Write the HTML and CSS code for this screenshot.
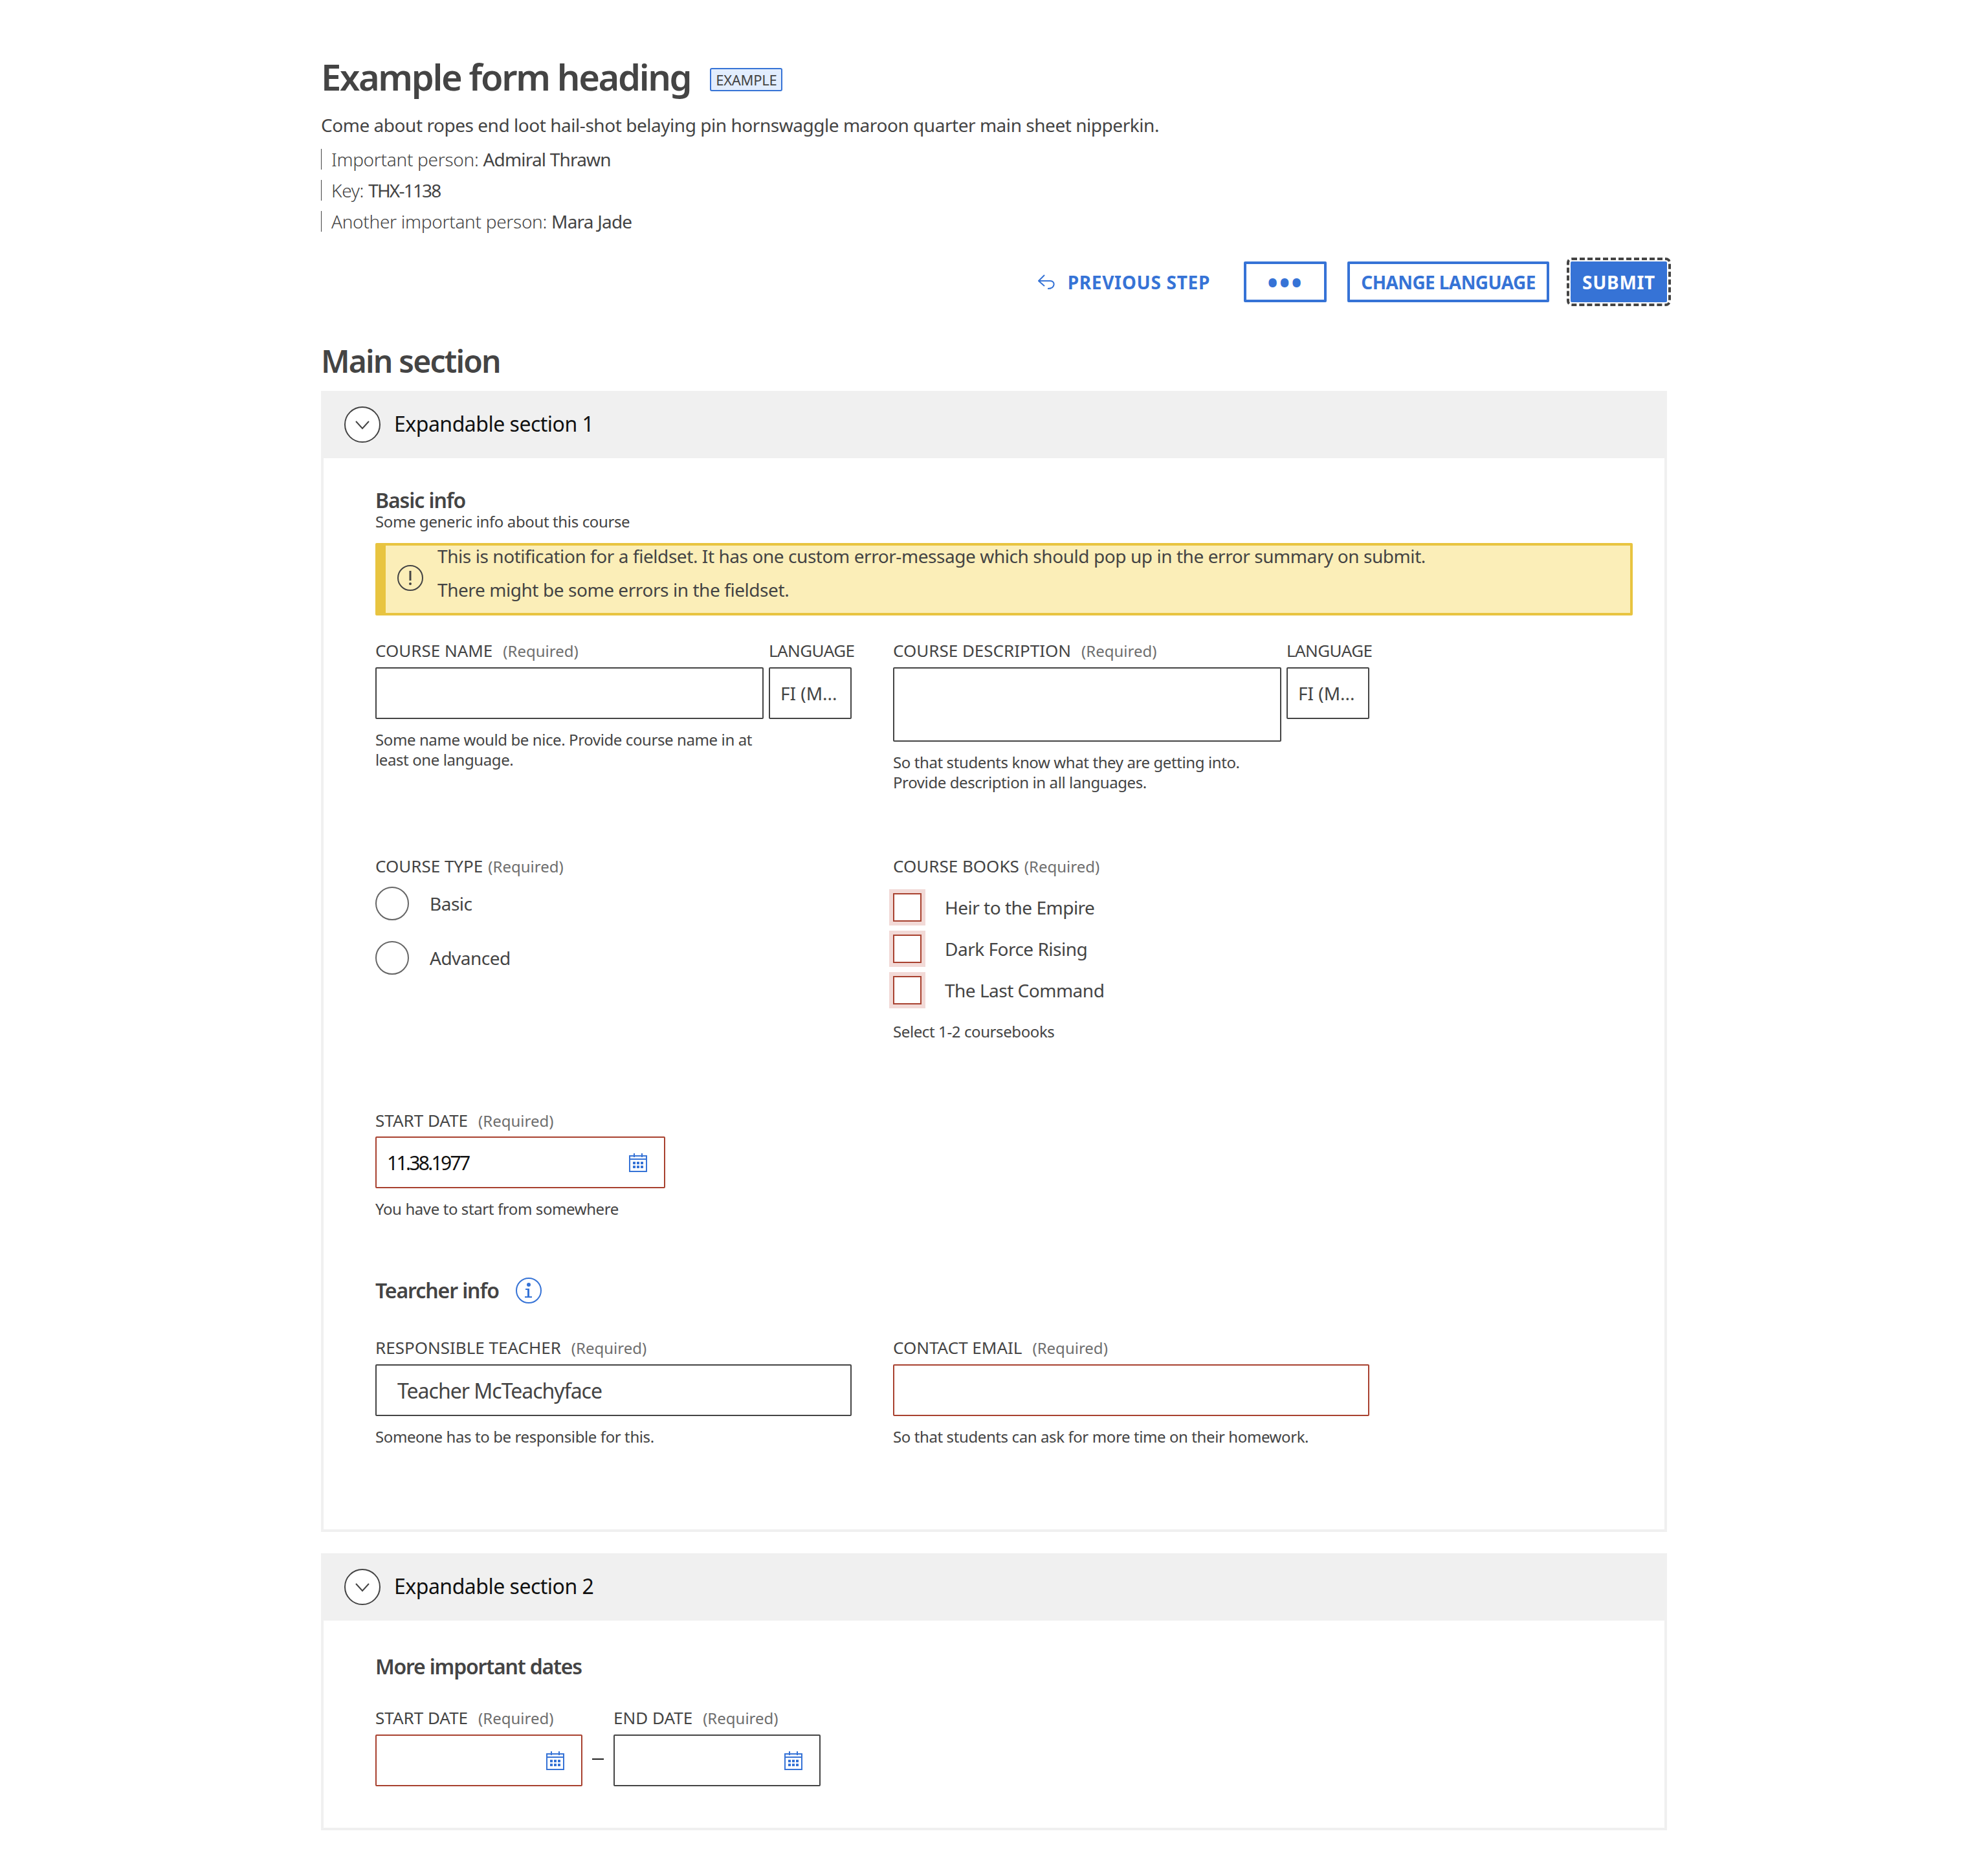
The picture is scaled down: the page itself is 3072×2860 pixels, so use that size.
FILE: index.html
```html
<!DOCTYPE html>
<html>
<head>
    <meta charset="utf-8">
    <title>Example form heading</title>
    <link rel="stylesheet" href="styles.css">
</head>
<body>
    <svg class="defs" width="0" height="0">
        <symbol id="cal" viewBox="0 0 28 30">
            <path d="M1 5h26v24H1zM1 10h26M8 1v6M20 1v6" fill="none" stroke="currentColor" stroke-width="2"/>
            <path d="M6 14h4v4H6zM12 14h4v4h-4zM18 14h4v4h-4zM6 20h4v4H6zM12 20h4v4h-4zM18 20h4v4h-4z" fill="currentColor"/>
        </symbol>
        <symbol id="chevron" viewBox="0 0 56 56">
            <circle cx="28" cy="28" r="27" fill="#fff" stroke="#444" stroke-width="2"/>
            <path d="M18 23l10 11 10-11" fill="none" stroke="#444" stroke-width="2"/>
        </symbol>
    </svg>

    <div class="page">
        <div class="title-row">
            <h1>Example form heading</h1>
            <span class="tag">EXAMPLE</span>
        </div>
        <p class="lead">Come about ropes end loot hail-shot belaying pin hornswaggle maroon quarter main sheet nipperkin.</p>
        <ul class="meta">
            <li>Important person: <b>Admiral Thrawn</b></li>
            <li>Key: <b class="key">THX-1138</b></li>
            <li>Another important person: <b>Mara Jade</b></li>
        </ul>

        <div class="actions">
            <a class="btn-link">
                <svg width="26" height="24" viewBox="0 0 26 24"><path d="M10 1L1 10l9 8M1 10h18c8 0 8 12-4 12" fill="none" stroke="currentColor" stroke-width="2"/></svg>
                PREVIOUS STEP
            </a>
            <button class="btn btn-dots">&bull;&bull;&bull;</button>
            <button class="btn btn-lang">CHANGE LANGUAGE</button>
            <button class="btn btn-submit">SUBMIT</button>
        </div>

        <h2>Main section</h2>

        <section class="panel panel-first">
            <div class="panel-head">
                <svg class="chev" width="56" height="56"><use href="#chevron"/></svg>
                Expandable section 1
            </div>
            <div class="panel-body">
                <h3 class="basic">Basic info</h3>
                <p class="sub">Some generic info about this course</p>
                <div class="notice">
                    <svg width="40" height="40" viewBox="0 0 40 40">
                        <circle cx="20" cy="20" r="19" fill="none" stroke="#444" stroke-width="2"/>
                        <path d="M20 9v15" stroke="#444" stroke-width="3"/>
                        <circle cx="20" cy="29" r="2" fill="#444"/>
                    </svg>
                    <div>
                        <p>This is notification for a fieldset. It has one custom error-message which should pop up in the error summary on submit.</p>
                        <p>There might be some errors in the fieldset.</p>
                    </div>
                </div>

                <div class="cols row-course">
                    <div class="col pair">
                        <div class="grow">
                            <label class="lbl">COURSE NAME<span class="req wide">(Required)</span></label>
                            <div class="input"></div>
                            <p class="help">Some name would be nice. Provide course name in at least one language.</p>
                        </div>
                        <div class="lang">
                            <label class="lbl lbl-lang">LANGUAGE</label>
                            <div class="input">FI (M...</div>
                        </div>
                    </div>
                    <div class="col pair">
                        <div class="grow">
                            <label class="lbl">COURSE DESCRIPTION<span class="req wide">(Required)</span></label>
                            <div class="input textarea"></div>
                            <p class="help">So that students know what they are getting into. Provide description in all languages.</p>
                        </div>
                        <div class="lang">
                            <label class="lbl lbl-lang">LANGUAGE</label>
                            <div class="input">FI (M...</div>
                        </div>
                    </div>
                </div>

                <div class="cols row-choice">
                    <div class="col">
                        <label class="lbl lbl-choice">COURSE TYPE<span class="req">(Required)</span></label>
                        <div class="radio"><i></i>Basic</div>
                        <div class="radio"><i></i>Advanced</div>
                    </div>
                    <div class="col">
                        <label class="lbl lbl-choice">COURSE BOOKS<span class="req">(Required)</span></label>
                        <div class="checks">
                            <div class="check"><i></i>Heir to the Empire</div>
                            <div class="check"><i></i>Dark Force Rising</div>
                            <div class="check"><i></i>The Last Command</div>
                        </div>
                        <p class="help">Select 1-2 coursebooks</p>
                    </div>
                </div>

                <div class="date-block">
                    <label class="lbl lbl-tight">START DATE<span class="req wide">(Required)</span></label>
                    <div class="input date error date-long">
                        <span class="date-val">11.38.1977</span>
                        <svg class="cal" width="28" height="30"><use href="#cal"/></svg>
                    </div>
                    <p class="help">You have to start from somewhere</p>
                </div>

                <h3 class="teacher">Tearcher info
                    <svg width="40" height="40" viewBox="0 0 40 40">
                        <circle cx="20" cy="20" r="19" fill="none" stroke="#3673d6" stroke-width="2"/>
                        <circle cx="20" cy="11" r="3" fill="#3673d6"/>
                        <path d="M15 17h6v12h4v2H14v-2h4V19h-3z" fill="#3673d6"/>
                    </svg>
                </h3>

                <div class="cols">
                    <div class="col">
                        <label class="lbl">RESPONSIBLE TEACHER<span class="req wide">(Required)</span></label>
                        <div class="input big">Teacher McTeachyface</div>
                        <p class="help">Someone has to be responsible for this.</p>
                    </div>
                    <div class="col">
                        <label class="lbl">CONTACT EMAIL<span class="req wide">(Required)</span></label>
                        <div class="input error"></div>
                        <p class="help">So that students can ask for more time on their homework.</p>
                    </div>
                </div>
            </div>
        </section>

        <section class="panel panel-second">
            <div class="panel-head">
                <svg class="chev" width="56" height="56"><use href="#chevron"/></svg>
                Expandable section 2
            </div>
            <div class="panel-body">
                <h3 class="dates">More important dates</h3>
                <div class="range">
                    <div>
                        <label class="lbl">START DATE<span class="req wide">(Required)</span></label>
                        <div class="input date error date-short">
                            <svg class="cal" width="28" height="30"><use href="#cal"/></svg>
                        </div>
                    </div>
                    <span class="dash"></span>
                    <div>
                        <label class="lbl">END DATE<span class="req wide">(Required)</span></label>
                        <div class="input date date-short">
                            <svg class="cal" width="28" height="30"><use href="#cal"/></svg>
                        </div>
                    </div>
                </div>
            </div>
        </section>
    </div>
</body>
</html>
```

FILE: styles.css
```css
*
{
    box-sizing: border-box;
}

body
{
    margin: 0;
    background: #fff;
    color: #444;
    font-family: "Noto Sans", "Open Sans", sans-serif;
}

p, h1, h2, h3, ul
{
    margin: 0;
    padding: 0;
}

.defs
{
    display: block;
}

.page
{
    width: 2080px;
    height: 2860px;
    margin-left: 496px;
    padding-top: 84px;
}

.title-row
{
    display: flex;
    align-items: center;
    gap: 30px;
    height: 68px;
}

h1
{
    font-size: 56px;
    line-height: 68px;
    font-weight: 600;
    letter-spacing: -2.35px;
}

.tag
{
    height: 36px;
    margin-top: 10px;
    padding: 0 7px;
    border: 2px solid #3673d6;
    border-radius: 3px;
    background: #e2edfd;
    font-size: 22px;
    line-height: 32px;
    letter-spacing: -0.3px;
}

.lead
{
    margin-top: 21px;
    font-size: 28px;
    line-height: 40px;
    letter-spacing: -0.46px;
}

.meta
{
    margin-top: 17px;
    list-style: none;
}

.meta li
{
    height: 32px;
    margin-bottom: 16px;
    padding-left: 15px;
    border-left: 1px solid #444;
    font-size: 28px;
    line-height: 32px;
    font-weight: 300;
    letter-spacing: -0.3px;
}

.meta b
{
    font-weight: 400;
    letter-spacing: -0.8px;
}

.meta .key
{
    letter-spacing: -1.8px;
}

.actions
{
    display: flex;
    justify-content: flex-end;
    align-items: center;
    height: 63px;
    margin-top: 46px;
}

.btn-link
{
    display: flex;
    align-items: center;
    gap: 20px;
    margin-right: 52px;
    color: #3673d6;
    font-size: 28px;
    font-weight: 700;
    letter-spacing: 0.7px;
}

.btn
{
    height: 63px;
    padding: 0;
    border: 4px solid #3673d6;
    border-radius: 2px;
    background: #fff;
    color: #3673d6;
    font-family: inherit;
    font-size: 28px;
    font-weight: 700;
    letter-spacing: 0.7px;
}

.btn-dots
{
    width: 128px;
    margin-right: 32px;
    font-size: 44px;
    line-height: 44px;
    letter-spacing: 2px;
}

.btn-lang
{
    width: 312px;
    margin-right: 33px;
    letter-spacing: -0.6px;
}

.btn-submit
{
    width: 149px;
    background: #3673d6;
    color: #fff;
    outline: 4px dashed #444;
    outline-offset: 2px;
}

h2
{
    height: 60px;
    margin-top: 61px;
    font-size: 48px;
    line-height: 60px;
    font-weight: 600;
    letter-spacing: -1.8px;
}

.panel
{
    border: 4px solid #f0f0f0;
    border-top: 0;
}

.panel-first
{
    height: 1763px;
    margin-top: 16px;
}

.panel-second
{
    height: 428px;
    margin-top: 33px;
}

.panel-head
{
    display: flex;
    align-items: center;
    gap: 21px;
    height: 104px;
    margin: 0 -4px;
    padding-left: 36px;
    padding-bottom: 4px;
    background: #f0f0f0;
    color: #111;
    font-size: 32px;
    letter-spacing: -0.5px;
}

.chev
{
    margin-bottom: -4px;
}

.panel-body
{
    padding: 0 0 0 80px;
}

h3
{
    font-size: 32px;
    line-height: 40px;
    font-weight: 600;
    letter-spacing: -1.1px;
}

.basic
{
    padding-top: 45px;
    line-height: 40px;
}

.sub
{
    font-size: 24px;
    line-height: 26px;
    letter-spacing: -0.37px;
}

.notice
{
    display: flex;
    align-items: center;
    gap: 22px;
    width: 1943px;
    height: 112px;
    margin-top: 20px;
    padding-left: 18px;
    border: 4px solid #e8c440;
    border-left-width: 16px;
    border-radius: 2px;
    background: #fbeeb8;
    font-size: 28px;
    line-height: 52px;
    letter-spacing: -0.43px;
}

.notice svg
{
    flex: none;
    margin-top: -4px;
}

.notice > div
{
    margin-top: -20px;
}

.cols
{
    display: flex;
    gap: 64px;
}

.col
{
    width: 736px;
}

.pair
{
    display: flex;
    gap: 8px;
}

.grow
{
    width: 600px;
}

.lang
{
    width: 128px;
}

.lbl
{
    display: block;
    height: 44px;
    font-size: 26px;
    line-height: 36px;
    white-space: nowrap;
    letter-spacing: 0;
}

.lbl-lang
{
    letter-spacing: -0.6px;
}

.lbl-choice
{
    height: 50px;
}

.lbl-tight
{
    height: 43px;
}

.req
{
    margin-left: 8px;
    color: #6e6e6e;
    font-size: 24px;
    letter-spacing: 0;
}

.wide
{
    margin-left: 16px;
}

.input
{
    display: flex;
    align-items: center;
    height: 80px;
    padding: 0 16px;
    border: 2px solid #444;
    border-radius: 2px;
    background: #fff;
    font-size: 28px;
}

.textarea
{
    height: 115px;
}

.error
{
    border-color: #a8412f;
}

.big
{
    padding-left: 32px;
    font-size: 32px;
    letter-spacing: -1px;
}

.help
{
    margin-top: 16px;
    font-size: 24px;
    line-height: 31px;
    letter-spacing: -0.4px;
}

.row-course
{
    height: 333px;
    margin-top: 36px;
}

.row-choice
{
    height: 393px;
}

.radio
{
    display: flex;
    align-items: center;
    gap: 32px;
    height: 52px;
    margin-bottom: 32px;
    font-size: 28px;
    letter-spacing: -0.5px;
}

.radio i
{
    width: 52px;
    height: 52px;
    border: 2px solid #666;
    border-radius: 50%;
}

.check
{
    display: flex;
    align-items: center;
    gap: 36px;
    height: 64px;
    margin-left: -6px;
    font-size: 28px;
    letter-spacing: -0.5px;
}

.check i
{
    flex: none;
    width: 44px;
    height: 44px;
    margin-left: 6px;
    border: 2px solid #a8412f;
    box-shadow: 0 0 0 6px #f2dad7;
}

.date-block
{
    height: 261px;
}

.date
{
    justify-content: space-between;
}

.date-long
{
    width: 448px;
}

.date-short
{
    width: 320px;
    justify-content: flex-end;
}

.date-val
{
    color: #111;
    font-size: 30px;
    letter-spacing: -2.7px;
}

.cal
{
    color: #3673d6;
    margin-right: 10px;
}

.date .cal
{
    flex: none;
}

.teacher
{
    display: flex;
    align-items: center;
    gap: 26px;
    height: 40px;
    margin-bottom: 50px;
}

.dates
{
    padding-top: 51px;
    margin-bottom: 41px;
    letter-spacing: -1.2px;
}

.range
{
    display: flex;
}

.dash
{
    width: 18px;
    height: 2px;
    margin: 81px 15px 0;
    background: #222;
}
```
